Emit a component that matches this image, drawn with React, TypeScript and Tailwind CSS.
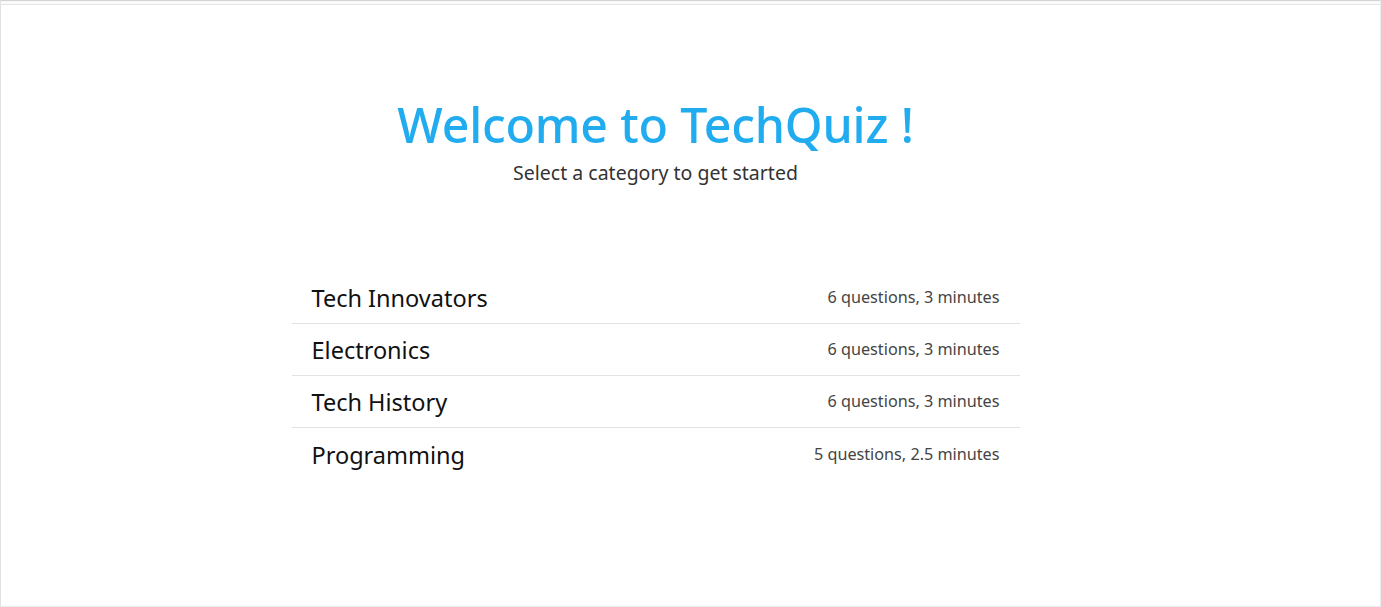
import React from 'react';

const categories = [
  { name: 'Tech Innovators', info: '6 questions, 3 minutes' },
  { name: 'Electronics', info: '6 questions, 3 minutes' },
  { name: 'Tech History', info: '6 questions, 3 minutes' },
  { name: 'Programming', info: '5 questions, 2.5 minutes' },
];

const App = () => {
  return (
    <div className="min-h-screen bg-white" style={{ fontFamily: '"Noto Sans", "Open Sans", sans-serif' }}>
      <div className="h-[607px] border-t border-t-[#d4d4d4] border-l border-l-[#e2e2e2] border-r border-r-[#ececec] border-b border-b-[#ececec]">
        <div className="h-[4px] border-b border-b-[#e6e6ea] bg-[#fafafa]" />
        <div className="pr-[70px]">
          {/* Header */}
          <div className="pt-[89px] flex flex-col items-center">
            <h1 className="text-[48.3px] leading-[60px] font-medium text-[#22acf0] tracking-[-0.2px]">Welcome to TechQuiz !</h1>
            <p className="mt-[5px] text-[19.5px] leading-[28px] text-[#333]">Select a category to get started</p>
          </div>

          {/* Categories */}
          <ul className="mx-auto mt-[85px] w-[728px]">
            {categories.map((c, i) => (
              <li
                key={c.name}
                className={`flex items-center justify-between h-[52px] px-5 ${i < categories.length - 1 ? 'border-b border-b-[#e3e3e3]' : ''}`}
              >
                <span className="text-[23.5px] text-[#111] pt-[3px]">{c.name}</span>
                <span className="text-[16.2px] text-[#444]">{c.info}</span>
              </li>
            ))}
          </ul>
        </div>
      </div>
    </div>
  );
};

export default App;
